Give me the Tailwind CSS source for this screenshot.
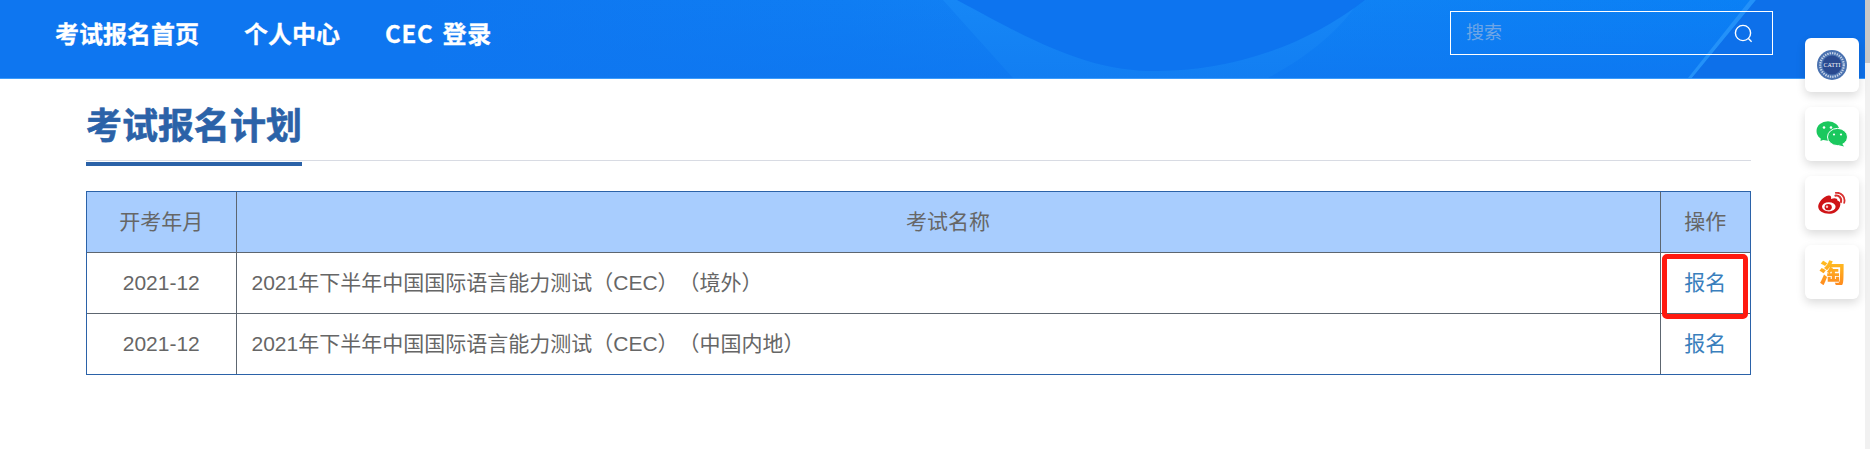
<!DOCTYPE html>
<html lang="zh-CN">
<head>
  <meta charset="UTF-8" />
  <meta name="viewport" content="width=device-width, initial-scale=1.0" />
  <title>考试报名计划</title>
  <script src="https://cdn.jsdelivr.net/npm/@tailwindcss/browser@4"></script>
</head>
<body class="bg-white overflow-hidden font-['Liberation_Sans','Noto_Sans_CJK_SC',sans-serif] [text-spacing-trim:space-all]">
  <div class="relative flex h-[449px] w-full overflow-hidden">
    <div class="flex-1 min-w-0">

      <!-- Header -->
      <header class="relative h-[79px] border-b border-[#3c9cfb] bg-[#0e76f0] overflow-hidden">
        <svg class="absolute inset-0" width="1865" height="78" viewBox="0 0 1865 78" fill="none">
          <defs>
            <linearGradient id="bandBg" x1="0" y1="0" x2="1" y2="0">
              <stop offset="0" stop-color="#0e76f0" />
              <stop offset="0.32" stop-color="#0f7df3" />
              <stop offset="0.5" stop-color="#1383f4" />
              <stop offset="1" stop-color="#0a80f5" />
            </linearGradient>
            <linearGradient id="fadeDown" x1="0" y1="0" x2="0" y2="1">
              <stop offset="0" stop-color="#0e76f0" stop-opacity="0" />
              <stop offset="1" stop-color="#0e76f0" stop-opacity="0.75" />
            </linearGradient>
            <linearGradient id="waveBand" x1="0" y1="0" x2="0" y2="1">
              <stop offset="0" stop-color="#1687f6" />
              <stop offset="1" stop-color="#127ef2" />
            </linearGradient>
          </defs>
          <path d="M420 0H1760L1692 78H420Z" fill="url(#bandBg)" />
          <path d="M420 0H1760L1692 78H420Z" fill="url(#fadeDown)" />
          <path d="M943 0L1013 78H1268C1310 55 1340 30 1360 0Z" fill="url(#waveBand)" />
          <path d="M957 0C1040 45 1090 71 1156 71C1225 71 1300 50 1365 0Z" fill="#0d74ef" />
          <path d="M1756 0L1692 78H1688L1750 0Z" fill="#2391f9" />
          <path d="M1756 0H1865V78H1692Z" fill="#0d70ea" />
        </svg>
        <div class="relative flex h-full items-start justify-between pl-[32px] pr-[92px]">
          <nav class="flex h-[66px] items-center text-[24px] font-bold text-white font-['Noto_Sans_CJK_SC',sans-serif] [-webkit-text-stroke:0.3px_#fff]">
            <a href="#" class="px-[23px]">考试报名首页</a>
            <a href="#" class="pl-[22px] pr-[23px]">个人中心</a>
            <a href="#" class="pl-[22px] pr-[23px] [word-spacing:3px] tracking-[0.7px]">CEC 登录</a>
          </nav>
          <div class="mt-[11px] flex h-[44px] w-[323px] items-center justify-between border border-white pl-[15px] pr-[19px]">
            <span class="text-[18px] text-[#6fa6e6]">搜索</span>
            <svg width="19" height="19" viewBox="0 0 19 19" fill="none" stroke="#fff" stroke-width="1.4">
              <circle cx="9" cy="9" r="7.6" />
              <path d="M14.4 14.6L17.6 17.8" />
            </svg>
          </div>
        </div>
      </header>

      <!-- Content -->
      <main class="pl-[86px] pr-[114px]">
        <div class="relative h-[82px] border-b border-[#d8dbe3]">
          <h1 class="pt-[17px] text-[36px] leading-[54px] font-bold text-[#2b62a8] font-['Noto_Sans_CJK_SC',sans-serif] [-webkit-text-stroke:0.6px_#2b62a8]">考试报名计划</h1>
          <div class="absolute left-0 top-[83px] h-[4px] w-[216px] bg-[#2b62a8]"></div>
        </div>

        <div class="relative mt-[30px] border border-[#2b62a8]">
          <table class="w-full table-fixed border-collapse text-[21px] text-[#666]">
            <thead>
              <tr class="h-[60px] bg-[#a8cdfe]">
                <th class="w-[149px] border-r border-[#5d6670] font-normal">开考年月</th>
                <th class="border-r border-[#5d6670] font-normal">考试名称</th>
                <th class="w-[90px] font-normal">操作</th>
              </tr>
            </thead>
            <tbody>
              <tr class="h-[61px] border-t border-[#5d6670]">
                <td class="border-r border-[#5d6670] text-center">2021-12</td>
                <td class="border-r border-[#5d6670] pl-[15px]">2021年下半年中国国际语言能力测试（CEC）（境外）</td>
                <td class="text-center text-[#3a7fbd]">报名</td>
              </tr>
              <tr class="h-[61px] border-t border-[#5d6670]">
                <td class="border-r border-[#5d6670] text-center">2021-12</td>
                <td class="border-r border-[#5d6670] pl-[15px]">2021年下半年中国国际语言能力测试（CEC）（中国内地）</td>
                <td class="text-center text-[#3a7fbd]">报名</td>
              </tr>
            </tbody>
          </table>
          <!-- red highlight round the first button -->
          <div class="absolute right-[2px] top-[62px] h-[65px] w-[86px] rounded-[5px] border-[5px] border-[#ff1a10]"></div>
        </div>
      </main>
    </div>

    <!-- Scrollbar -->
    <div class="w-[5px] bg-[#f1f1f1]">
      <div class="h-[63px] bg-[#c8c8c8]"></div>
    </div>

    <!-- Side buttons -->
    <div class="absolute right-[11px] top-[38px] flex flex-col gap-[15px]">
      <a href="#" class="flex h-[54px] w-[54px] items-center justify-center rounded-[6px] bg-white shadow-[0_4px_10px_rgba(0,0,0,0.14)]">
        <svg width="30" height="30" viewBox="0 0 30 30">
          <circle cx="15" cy="15" r="15" fill="#4a72b0" />
          <circle cx="15" cy="15" r="11.8" fill="none" stroke="#c6d3e8" stroke-width="2.2" stroke-dasharray="1.4 1" />
          <circle cx="15" cy="15" r="9.6" fill="#2a4a90" />
          <text x="15" y="17" text-anchor="middle" font-size="6" fill="#fff" font-family="Liberation Serif, serif">CATTI</text>
        </svg>
      </a>
      <a href="#" class="flex h-[54px] w-[54px] items-center justify-center rounded-[6px] bg-white shadow-[0_4px_10px_rgba(0,0,0,0.14)]">
        <svg width="32" height="26" viewBox="0 0 32 26">
          <ellipse cx="12" cy="10" rx="11.5" ry="9.8" fill="#1bc85e" />
          <path d="M5 16L4.5 20L9.5 18Z" fill="#1bc85e" />
          <ellipse cx="21.5" cy="16" rx="10" ry="8.6" fill="#1bc85e" stroke="#fff" stroke-width="1" />
          <path d="M26 22.5L28 25.5L22 24Z" fill="#1bc85e" />
          <circle cx="8" cy="6.5" r="1.3" fill="#fff" />
          <circle cx="15" cy="6.5" r="1.3" fill="#fff" />
          <circle cx="18" cy="13.5" r="1.1" fill="#fff" />
          <circle cx="25" cy="13.5" r="1.1" fill="#fff" />
        </svg>
      </a>
      <a href="#" class="flex h-[54px] w-[54px] items-center justify-center rounded-[6px] bg-white shadow-[0_4px_10px_rgba(0,0,0,0.14)]">
        <svg width="28" height="22" viewBox="0 0 28 22">
          <path d="M11 21.8C5 21.8 0.2 18.9 0.2 14.6C0.2 10.3 5.5 4.4 10.5 3.5C12.8 3.2 13.6 4.9 13 7C16.5 5.7 19.6 6.1 19.4 8.5C22 9.3 22.6 11 22.3 12.9C21.6 17.9 16.8 21.8 11 21.8Z" fill="#cf1417" />
          <ellipse cx="10.8" cy="14.8" rx="6.8" ry="4.6" fill="#fff" />
          <ellipse cx="10.2" cy="15.2" rx="3.6" ry="3.1" fill="#cf1417" />
          <circle cx="9" cy="14.8" r="1.2" fill="#f6c9c9" />
          <path d="M17.5 3.6C21 3 24.2 6.4 23 10" fill="none" stroke="#d9302f" stroke-width="2.2" stroke-linecap="round" />
          <path d="M17.8 0.9C23.2 0 27.8 5.2 26.2 10.8" fill="none" stroke="#d9302f" stroke-width="1.8" stroke-linecap="round" />
        </svg>
      </a>
      <a href="#" class="flex h-[54px] w-[54px] items-center justify-center rounded-[6px] bg-white shadow-[0_4px_10px_rgba(0,0,0,0.14)]">
        <span class="bg-gradient-to-b from-[#ffc21f] to-[#ff8a1e] bg-clip-text text-[26px] leading-none font-black text-transparent font-['Noto_Sans_CJK_SC',sans-serif]">淘</span>
      </a>
    </div>
  </div>
</body>
</html>
